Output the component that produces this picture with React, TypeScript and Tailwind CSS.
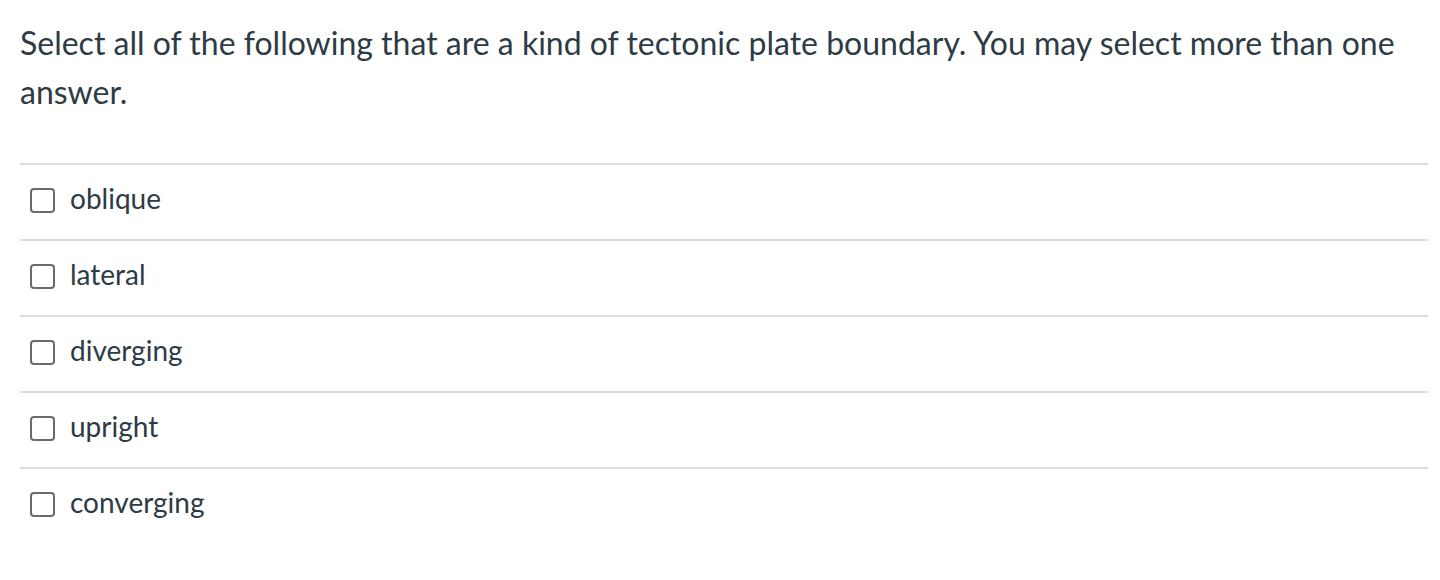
import React from "react";

const options = ["oblique", "lateral", "diverging", "upright", "converging"];

export default function App() {
  return (
    <div
      className="w-[1440px] h-[580px] bg-white text-[#2d3b45]"
      style={{ fontFamily: "Lato, 'Noto Sans', sans-serif" }}
    >
      <div className="pl-[20px] pr-[12px] pt-[18px]">
        <p className="text-[32px] leading-[49px]">
          Select all of the following that are a kind of tectonic plate boundary. You may select more than one answer.
        </p>
        <div className="mt-[47px] w-[1408px]">
          {options.map((o) => (
            <div
              key={o}
              className="h-[76px] flex items-center border-t-2 border-[#dedede] pl-[10px] pb-[3px]"
            >
              <span className="w-[25px] h-[25px] border-2 border-[#6b6b6b] rounded-[4px] shrink-0" />
              <span className="ml-[15px] text-[28px] leading-[28px] pb-[5px]">{o}</span>
            </div>
          ))}
        </div>
      </div>
    </div>
  );
}
